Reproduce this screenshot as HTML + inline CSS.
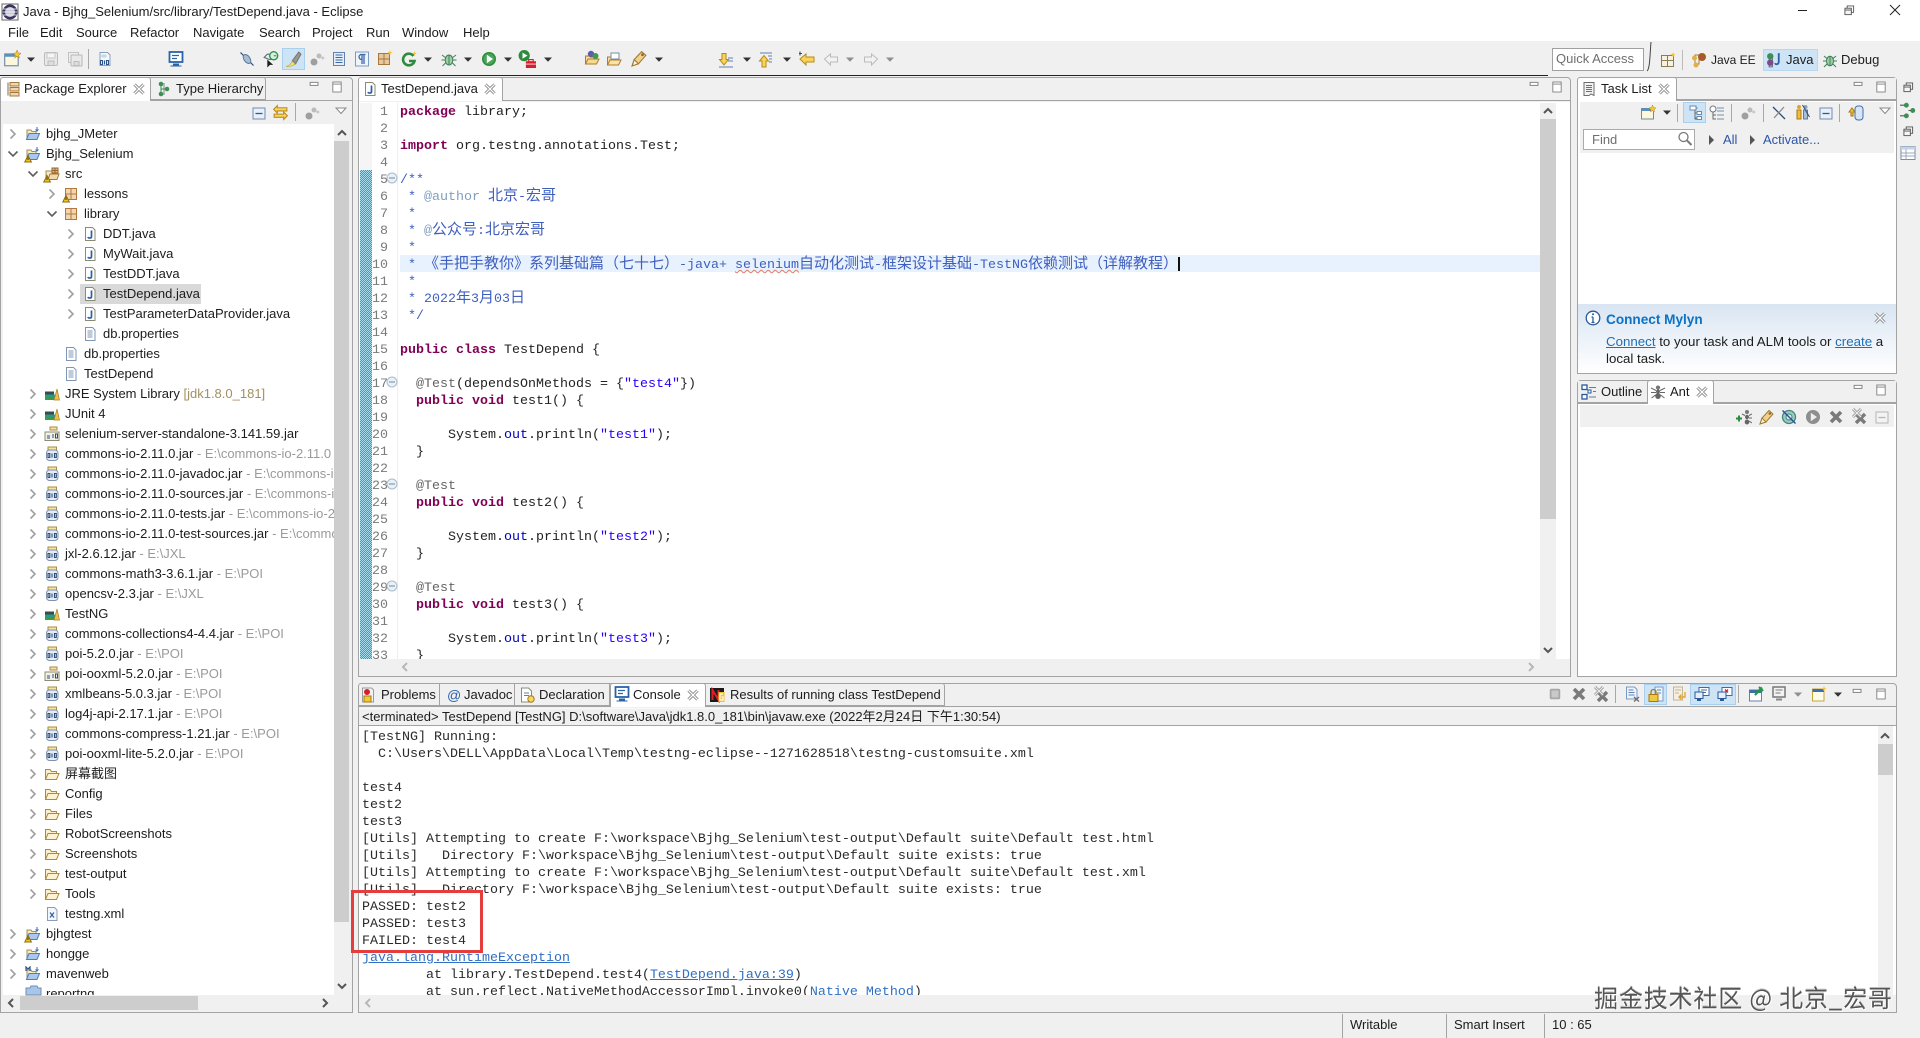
<!DOCTYPE html>
<html lang="zh"><head><meta charset="utf-8"><title>Java - Bjhg_Selenium/src/library/TestDepend.java - Eclipse</title>
<style>
*{box-sizing:border-box}
html,body{margin:0;padding:0}
body{width:1920px;height:1038px;overflow:hidden;background:#f0f0f0;position:relative;font:13px/20px "Liberation Sans","Noto Sans CJK SC",sans-serif;color:#1c1c1c}
.a{position:absolute}
.t{position:absolute;white-space:pre;line-height:20px}
.p{position:absolute;border:1px solid #a3a3a3;border-radius:4px 4px 0 0;background:#f0f0f0}
.hl{position:absolute;left:0;right:0;height:1px;background:#a3a3a3}
.tab{position:absolute;background:#fff;border:1px solid #a3a3a3;border-bottom:0;border-radius:3px 3px 0 0}
.tg{position:absolute;background:#f0f0f0;border:1px solid #a3a3a3;border-left:0;border-radius:0 3px 0 0}
#tree{position:absolute;left:3px;top:124px;width:331px;height:871px;overflow:hidden;background:#fff}
#tree div{height:20px;line-height:20px;white-space:pre;position:relative}
.l0{padding-left:43px}.l1{padding-left:62px}.l2{padding-left:81px}.l3{padding-left:100px}
#tree i{font-style:normal;color:#9a9a9a}
#tree b{font-weight:normal;color:#a38f62}
.ln{height:17px;line-height:17px;white-space:pre}
.m{font-family:"Liberation Mono",monospace;font-size:13.33px}
.k{color:#7f0055;font-weight:bold}
.c{color:#3f5fbf}
.j{color:#7f9fbf}
.h{font:15px/0 "Noto Sans CJK SC",sans-serif}
.s{color:#2a00ff}
.f{color:#0000c0}
.an{color:#646464}
.lk{color:#2f6fc4;text-decoration:underline}
</style></head><body>

<div class="a" style="left:0;top:0;width:1920px;height:41px;background:#fff"></div>
<div class="a" style="left:0;top:41px;width:1920px;height:34px;background:#f0f0f0"></div>
<div class="a" style="left:0;top:75px;width:1548px;height:1px;background:#222"></div>
<div class="t" style="left:23px;top:2px">Java - Bjhg_Selenium/src/library/TestDepend.java - Eclipse</div>
<div class="t" style="left:8px;top:23px">File</div>
<div class="t" style="left:40px;top:23px">Edit</div>
<div class="t" style="left:76px;top:23px">Source</div>
<div class="t" style="left:130px;top:23px">Refactor</div>
<div class="t" style="left:193px;top:23px">Navigate</div>
<div class="t" style="left:259px;top:23px">Search</div>
<div class="t" style="left:312px;top:23px">Project</div>
<div class="t" style="left:366px;top:23px">Run</div>
<div class="t" style="left:402px;top:23px">Window</div>
<div class="t" style="left:463px;top:23px">Help</div>

<div class="a" style="left:282px;top:48px;width:23px;height:22px;background:#cde4f7;border:1px solid #a8cfee"></div>
<div class="a" style="left:1552px;top:48px;width:92px;height:23px;background:#fff;border:1px solid #a0a0a0"></div>
<div class="t" style="left:1556px;top:49px;color:#6f6f6f">Quick Access</div>
<div class="a" style="left:1763px;top:49px;width:55px;height:22px;background:#cde4f7;border:1px solid #b8d8f2"></div>
<div class="t" style="left:1711px;top:50px;font-size:12px">Java EE</div>
<div class="t" style="left:1786px;top:50px">Java</div>
<div class="t" style="left:1841px;top:50px">Debug</div>

<!-- Package Explorer -->
<div class="p" style="left:0;top:77px;width:353px;height:936px"><div class="hl" style="top:22px"></div></div>
<div class="tab" style="left:0;top:77px;width:151px;height:24px"></div>
<div class="tg" style="left:151px;top:77px;width:115px;height:23px"></div>
<div class="t" style="left:24px;top:79px">Package Explorer</div>
<div class="t" style="left:176px;top:79px">Type Hierarchy</div>
<div id="tree">
<div class="a" style="position:absolute;left:77px;top:160px;width:121px;height:20px;background:#d9d9d9"></div>
<div class="l0">bjhg_JMeter</div>
<div class="l0">Bjhg_Selenium</div>
<div class="l1">src</div>
<div class="l2">lessons</div>
<div class="l2">library</div>
<div class="l3">DDT.java</div>
<div class="l3">MyWait.java</div>
<div class="l3">TestDDT.java</div>
<div class="l3">TestDepend.java</div>
<div class="l3">TestParameterDataProvider.java</div>
<div class="l3">db.properties</div>
<div class="l2">db.properties</div>
<div class="l2">TestDepend</div>
<div class="l1">JRE System Library <b>[jdk1.8.0_181]</b></div>
<div class="l1">JUnit 4</div>
<div class="l1">selenium-server-standalone-3.141.59.jar</div>
<div class="l1">commons-io-2.11.0.jar <i>- E:\commons-io-2.11.0</i></div>
<div class="l1">commons-io-2.11.0-javadoc.jar <i>- E:\commons-io-2.11.0</i></div>
<div class="l1">commons-io-2.11.0-sources.jar <i>- E:\commons-io-2.11.0</i></div>
<div class="l1">commons-io-2.11.0-tests.jar <i>- E:\commons-io-2.11.0</i></div>
<div class="l1">commons-io-2.11.0-test-sources.jar <i>- E:\commons-io-2.11.0</i></div>
<div class="l1">jxl-2.6.12.jar <i>- E:\JXL</i></div>
<div class="l1">commons-math3-3.6.1.jar <i>- E:\POI</i></div>
<div class="l1">opencsv-2.3.jar <i>- E:\JXL</i></div>
<div class="l1">TestNG</div>
<div class="l1">commons-collections4-4.4.jar <i>- E:\POI</i></div>
<div class="l1">poi-5.2.0.jar <i>- E:\POI</i></div>
<div class="l1">poi-ooxml-5.2.0.jar <i>- E:\POI</i></div>
<div class="l1">xmlbeans-5.0.3.jar <i>- E:\POI</i></div>
<div class="l1">log4j-api-2.17.1.jar <i>- E:\POI</i></div>
<div class="l1">commons-compress-1.21.jar <i>- E:\POI</i></div>
<div class="l1">poi-ooxml-lite-5.2.0.jar <i>- E:\POI</i></div>
<div class="l1">屏幕截图</div>
<div class="l1">Config</div>
<div class="l1">Files</div>
<div class="l1">RobotScreenshots</div>
<div class="l1">Screenshots</div>
<div class="l1">test-output</div>
<div class="l1">Tools</div>
<div class="l1">testng.xml</div>
<div class="l0">bjhgtest</div>
<div class="l0">hongge</div>
<div class="l0">mavenweb</div>
<div class="l0">reportng</div>
</div>
<div class="a" style="left:334px;top:124px;width:16px;height:871px;background:#f0f0f0"></div>
<div class="a" style="left:334px;top:141px;width:15px;height:781px;background:#cdcdcd"></div>
<div class="a" style="left:20px;top:996px;width:178px;height:14px;background:#cdcdcd"></div>

<!-- Editor -->
<div class="p" style="left:358px;top:77px;width:1213px;height:600px"><div class="hl" style="top:22px"></div></div>
<div class="tab" style="left:358px;top:77px;width:145px;height:24px"></div>
<div class="t" style="left:381px;top:79px">TestDepend.java</div>
<div class="a" style="left:359px;top:102px;width:1211px;height:557px;background:#fff"></div>
<div class="a" style="left:360px;top:103px;width:12px;height:67px;background:#f5f5f5"></div>
<div class="a" style="left:360px;top:170px;width:12px;height:489px;background:repeating-conic-gradient(#2f9fc8 0 25%,#a9dcec 0 50%) 0 0/2px 2px"></div>
<div class="a" style="left:397px;top:103px;width:1px;height:556px;background:#eee"></div>
<div class="a" style="left:400px;top:255px;width:1140px;height:17px;background:#e8f2fe"></div>
<div class="a m" style="left:372px;top:104px;width:16px;height:555px;overflow:hidden;text-align:right;color:#7a7a7a">
<div class="ln"> 1</div><div class="ln"> 2</div><div class="ln"> 3</div><div class="ln"> 4</div><div class="ln"> 5</div><div class="ln"> 6</div><div class="ln"> 7</div><div class="ln"> 8</div><div class="ln"> 9</div><div class="ln">10</div><div class="ln">11</div><div class="ln">12</div><div class="ln">13</div><div class="ln">14</div><div class="ln">15</div><div class="ln">16</div><div class="ln">17</div><div class="ln">18</div><div class="ln">19</div><div class="ln">20</div><div class="ln">21</div><div class="ln">22</div><div class="ln">23</div><div class="ln">24</div><div class="ln">25</div><div class="ln">26</div><div class="ln">27</div><div class="ln">28</div><div class="ln">29</div><div class="ln">30</div><div class="ln">31</div><div class="ln">32</div><div class="ln">33</div>
</div>
<div class="a m" style="left:400px;top:104px;width:1140px;height:555px;overflow:hidden;color:#222">
<div class="ln"><span class="k">package</span> library;</div>
<div class="ln"></div>
<div class="ln"><span class="k">import</span> org.testng.annotations.Test;</div>
<div class="ln"></div>
<div class="ln c">/**</div>
<div class="ln c"> * <span class="j">@author</span> <span class="h">北京</span>-<span class="h">宏哥</span></div>
<div class="ln c"> *</div>
<div class="ln c"> * <span class="j">@</span><span class="h">公众号</span>:<span class="h">北京宏哥</span></div>
<div class="ln c"> *</div>
<div class="ln c"> * <span class="h">《手把手教你》系列基础篇（七十七）</span>-java+ <span style="text-decoration:underline wavy #e07a6a 1px">selenium</span><span class="h">自动化测试</span>-<span class="h">框架设计基础</span>-TestNG<span class="h">依赖测试（详解教程）</span></div>
<div class="ln c"> *</div>
<div class="ln c"> * 2022<span class="h">年</span>3<span class="h">月</span>03<span class="h">日</span></div>
<div class="ln c"> */</div>
<div class="ln"></div>
<div class="ln"><span class="k">public</span> <span class="k">class</span> TestDepend {</div>
<div class="ln"></div>
<div class="ln">  <span class="an">@Test</span>(dependsOnMethods = {<span class="s">"test4"</span>})</div>
<div class="ln">  <span class="k">public</span> <span class="k">void</span> test1() {</div>
<div class="ln"></div>
<div class="ln">      System.<span class="f">out</span>.println(<span class="s">"test1"</span>);</div>
<div class="ln">  }</div>
<div class="ln"></div>
<div class="ln">  <span class="an">@Test</span></div>
<div class="ln">  <span class="k">public</span> <span class="k">void</span> test2() {</div>
<div class="ln"></div>
<div class="ln">      System.<span class="f">out</span>.println(<span class="s">"test2"</span>);</div>
<div class="ln">  }</div>
<div class="ln"></div>
<div class="ln">  <span class="an">@Test</span></div>
<div class="ln">  <span class="k">public</span> <span class="k">void</span> test3() {</div>
<div class="ln"></div>
<div class="ln">      System.<span class="f">out</span>.println(<span class="s">"test3"</span>);</div>
<div class="ln">  }</div>
</div>
<div class="a" style="left:1178px;top:257px;width:2px;height:14px;background:#111"></div>
<div class="a" style="left:1540px;top:103px;width:16px;height:556px;background:#f0f0f0"></div>
<div class="a" style="left:1540px;top:119px;width:16px;height:400px;background:#cdcdcd"></div>
<div class="a" style="left:359px;top:659px;width:1211px;height:17px;background:#f0f0f0"></div>

<!-- Task List -->
<div class="p" style="left:1577px;top:77px;width:320px;height:297px;background:#fff"><div class="hl" style="top:22px"></div></div>
<div class="a" style="left:1578px;top:78px;width:318px;height:22px;background:#f0f0f0"></div>
<div class="a" style="left:1578px;top:99px;width:318px;height:1px;background:#a3a3a3"></div>
<div class="tab" style="left:1577px;top:77px;width:100px;height:24px"></div>
<div class="t" style="left:1601px;top:79px">Task List</div>
<div class="a" style="left:1580px;top:102px;width:314px;height:51px;background:#f0f0f0"></div>
<div class="a" style="left:1683px;top:102px;width:23px;height:21px;background:#cde4f7;border:1px solid #a8cfee"></div>
<div class="a" style="left:1583px;top:129px;width:112px;height:21px;background:#fff;border:1px solid #aaa"></div>
<div class="t" style="left:1592px;top:130px;color:#6f6f6f">Find</div>
<div class="t" style="left:1723px;top:130px;color:#2c55a8">All</div>
<div class="t" style="left:1763px;top:130px;color:#2c55a8">Activate...</div>
<div class="a" style="left:1578px;top:304px;width:318px;height:69px;background:linear-gradient(#d9e5f2,#fff)"></div>
<div class="t" style="left:1606px;top:310px;font-size:13.6px;font-weight:bold;color:#0b72c6">Connect Mylyn</div>
<div class="t" style="left:1606px;top:332px;font-size:13.3px"><span style="color:#1f6fb5;text-decoration:underline">Connect</span> to your task and ALM tools or <span style="color:#1f6fb5;text-decoration:underline">create</span> a</div>
<div class="t" style="left:1606px;top:349px;font-size:13.3px">local task.</div>

<!-- Outline / Ant -->
<div class="p" style="left:1577px;top:380px;width:320px;height:297px;background:#fff"><div class="hl" style="top:22px"></div></div>
<div class="a" style="left:1578px;top:381px;width:318px;height:22px;background:#f0f0f0"></div>
<div class="a" style="left:1578px;top:402px;width:318px;height:1px;background:#a3a3a3"></div>
<div class="tab" style="left:1647px;top:380px;width:67px;height:24px"></div>
<div class="a" style="left:1580px;top:405px;width:314px;height:22px;background:#f0f0f0"></div>
<div class="t" style="left:1601px;top:382px">Outline</div>
<div class="t" style="left:1670px;top:382px">Ant</div>

<!-- Console -->
<div class="p" style="left:358px;top:683px;width:1539px;height:330px"><div class="hl" style="top:22px"></div></div>
<div class="tg" style="left:358px;top:683px;width:82px;height:23px;border-left:1px solid #a3a3a3;border-radius:3px 0 0 0"></div>
<div class="tg" style="left:440px;top:683px;width:75px;height:23px;border-radius:0"></div>
<div class="tg" style="left:515px;top:683px;width:95px;height:23px;border-radius:0"></div>
<div class="tab" style="left:610px;top:683px;width:96px;height:24px"></div>
<div class="tg" style="left:706px;top:683px;width:239px;height:23px"></div>
<div class="t" style="left:381px;top:685px">Problems</div>
<div class="t" style="left:464px;top:685px">Javadoc</div>
<div class="t" style="left:539px;top:685px">Declaration</div>
<div class="t" style="left:633px;top:685px">Console</div>
<div class="t" style="left:730px;top:685px">Results of running class TestDepend</div>
<div class="a" style="left:1644px;top:684px;width:23px;height:21px;background:#cde4f7;border:1px solid #a8cfee"></div>
<div class="a" style="left:1690px;top:684px;width:46px;height:21px;background:#cde4f7;border:1px solid #a8cfee"></div>
<div class="t" style="left:362px;top:707px">&lt;terminated&gt; TestDepend [TestNG] D:\software\Java\jdk1.8.0_181\bin\javaw.exe (2022年2月24日 下午1:30:54)</div>
<div class="a" style="left:359px;top:708px;width:1537px;height:1px;background:#f8f8f8"></div>
<div class="a" style="left:359px;top:725px;width:1537px;height:1px;background:#a3a3a3"></div>
<div class="a" style="left:359px;top:726px;width:1537px;height:269px;background:#fff"></div>
<div class="a m" style="left:362px;top:729px;width:1516px;height:266px;overflow:hidden;color:#2a2a2a">
<div class="ln">[TestNG] Running:</div>
<div class="ln">  C:\Users\DELL\AppData\Local\Temp\testng-eclipse--1271628518\testng-customsuite.xml</div>
<div class="ln"></div>
<div class="ln">test4</div>
<div class="ln">test2</div>
<div class="ln">test3</div>
<div class="ln">[Utils] Attempting to create F:\workspace\Bjhg_Selenium\test-output\Default suite\Default test.html</div>
<div class="ln">[Utils]   Directory F:\workspace\Bjhg_Selenium\test-output\Default suite exists: true</div>
<div class="ln">[Utils] Attempting to create F:\workspace\Bjhg_Selenium\test-output\Default suite\Default test.xml</div>
<div class="ln">[Utils]   Directory F:\workspace\Bjhg_Selenium\test-output\Default suite exists: true</div>
<div class="ln">PASSED: test2</div>
<div class="ln">PASSED: test3</div>
<div class="ln">FAILED: test4</div>
<div class="ln"><span class="lk">java.lang.RuntimeException</span></div>
<div class="ln">        at library.TestDepend.test4(<span class="lk">TestDepend.java:39</span>)</div>
<div class="ln">        at sun.reflect.NativeMethodAccessorImpl.invoke0(<span class="lk" style="text-decoration:none">Native Method</span>)</div>
</div>
<div class="a" style="left:1878px;top:726px;width:15px;height:269px;background:#f0f0f0"></div>
<div class="a" style="left:1878px;top:744px;width:15px;height:31px;background:#cdcdcd"></div>
<div class="a" style="left:359px;top:995px;width:1537px;height:17px;background:#f0f0f0"></div>

<!-- Status bar -->
<div class="a" style="left:1342px;top:1014px;width:1px;height:24px;background:#a3a3a3"></div>
<div class="a" style="left:1446px;top:1014px;width:1px;height:24px;background:#a3a3a3"></div>
<div class="a" style="left:1544px;top:1014px;width:1px;height:24px;background:#a3a3a3"></div>
<div class="t" style="left:1350px;top:1015px">Writable</div>
<div class="t" style="left:1454px;top:1015px">Smart Insert</div>
<div class="t" style="left:1552px;top:1015px">10 : 65</div>

<!-- Icons -->
<svg class="a" style="left:0;top:0" width="1920" height="1038" viewBox="0 0 1920 1038">
<defs>
<symbol id="chr" viewBox="0 0 16 16"><path d="M5.500 3.500 10 8l-4.500 4.500" fill="none" stroke="#a0a0a0" stroke-width="1.600"/></symbol>
<symbol id="chd" viewBox="0 0 16 16"><path d="M3.500 5.500 8 10l4.500-4.500" fill="none" stroke="#5f5f5f" stroke-width="1.600"/></symbol>
<symbol id="prj" viewBox="0 0 16 16"><path d="M2 13V4h4l1 1.500h4V8" fill="#f7e9c4" stroke="#a58c55"/><path d="M1.500 13.500 4 7.500h10.500l-2.500 6z" fill="#a9c8ec" stroke="#4d7fbf"/><path d="M12 1v4M10.500 3.500 12 5l1.500-1.500" fill="none" stroke="#3d6fb0"/></symbol>
<symbol id="warn" viewBox="0 0 16 16"><path d="M4 8.500.8 15h6.600z" fill="#f5c518" stroke="#8a6d10"/><path d="M4 10.500v2.500" stroke="#333"/></symbol>
<symbol id="mvn" viewBox="0 0 16 16"><path d="M2 13V4h4l1 1.500h4V8" fill="#f7e9c4" stroke="#a58c55"/><path d="M1.500 13.500 4 7.500h10.500l-2.500 6z" fill="#a9c8ec" stroke="#4d7fbf"/><path d="M1 5V1l2 2 2-2v4" fill="none" stroke="#26508a" stroke-width="1.200"/><path d="M12 1v4M10.500 3.500 12 5l1.500-1.500" fill="none" stroke="#3d6fb0"/></symbol>
<symbol id="src" viewBox="0 0 16 16"><path d="M2 13V5h11v8z" fill="#f7e9c4" stroke="#a58c55"/><path d="M4 13.500 6 8h9l-2 5.500z" fill="#f4d9a8" stroke="#a5793d"/><rect x="8" y="2" width="6" height="5" fill="#e0b37c" stroke="#96642f"/><path d="M11 2v5M8 4.500h6" stroke="#96642f"/></symbol>
<symbol id="pkg" viewBox="0 0 16 16"><rect x="2.500" y="2.500" width="11" height="11" fill="#f2d6b0" stroke="#b2793f"/><path d="M8 2.500v11M2.500 8h11" stroke="#b2793f"/></symbol>
<symbol id="jf" viewBox="0 0 16 16"><path d="M3.500 1.500h7l2.500 2.500v10.500H3.500z" fill="#fff" stroke="#8b8b72"/><path d="M9.500 4.500v6c0 2-3 2-3.500.500" fill="none" stroke="#2c5fa8" stroke-width="1.700"/></symbol>
<symbol id="txt" viewBox="0 0 16 16"><path d="M3.500 1.500h7l2.500 2.500v10.500H3.500z" fill="#fff" stroke="#7f95b5"/><path d="M5.500 5h5M5.500 7h5M5.500 9h5M5.500 11h5" stroke="#7f95b5"/></symbol>
<symbol id="xml" viewBox="0 0 16 16"><path d="M3.500 1.500h7l2.500 2.500v10.500H3.500z" fill="#f3f6fb" stroke="#8b9cb5"/><path d="M6 6.500l4 5M10 6.500l-4 5" stroke="#2c5fa8" stroke-width="1.200"/></symbol>
<symbol id="lib" viewBox="0 0 16 16"><rect x="1" y="5.500" width="9" height="3" fill="#3c4a50"/><rect x="1" y="8.500" width="10" height="2.500" fill="#2a9a86"/><rect x="1" y="11" width="10" height="3" fill="#3f9a3f"/><path d="M10 14 13 3l2.500 11z" fill="#eec14e" stroke="#a27f22" stroke-width=".7"/></symbol>
<symbol id="jar" viewBox="0 0 16 16"><rect x="4" y="1" width="8.500" height="3" fill="#f6e3a6" stroke="#a98b45"/><rect x="2.500" y="4" width="11.500" height="10.500" rx="3" fill="#e3ecf6" stroke="#7f92ab"/><path d="M4 7.500h1.800v4H4zM10.500 7.500h1.800v4h-1.800zM8 7.500v4" fill="none" stroke="#2d4d78" stroke-width="1.100"/></symbol>
<symbol id="jar2" viewBox="0 0 16 16"><rect x="6" y="1" width="7" height="3" fill="#f6e3a6" stroke="#a98b45"/><rect x="1" y="6" width="14" height="8.500" fill="#f0f0e4" stroke="#8b8b72"/><path d="M3 10h3M3 12h3M9 8v4M11.500 8h2v4h-2z" fill="none" stroke="#2d4d78"/></symbol>
<symbol id="fld" viewBox="0 0 16 16"><path d="M1.500 13.500V3.500h4.500l1.500 2h5v2" fill="#fbeecb" stroke="#b08a3c"/><path d="M1.500 13.500 4 7.500h11l-2.500 6z" fill="#fdf2d4" stroke="#b08a3c"/></symbol>
<symbol id="x" viewBox="0 0 12 12"><path d="M1.500 1.500l9 9M10.500 1.500l-9 9" stroke="#777" stroke-width="3" fill="none"/><path d="M1.500 1.500l9 9M10.500 1.500l-9 9" stroke="#fff" stroke-width="1.300" fill="none"/></symbol>
<symbol id="min" viewBox="0 0 12 8"><rect x="1" y="1.500" width="9" height="3.500" fill="#fff" stroke="#777"/></symbol>
<symbol id="max" viewBox="0 0 12 14"><rect x="1" y="1" width="10" height="12" fill="#fff" stroke="#777"/><path d="M1 3.500h10" stroke="#777"/></symbol>
<symbol id="dd" viewBox="0 0 8 5"><path d="M0 .5h8L4 4.800z" fill="#333"/></symbol>
<symbol id="ddg" viewBox="0 0 8 5"><path d="M0 .5h8L4 4.800z" fill="#8e8e8e"/></symbol>
<symbol id="tri" viewBox="0 0 12 8"><path d="M1 1h10L6 6.500z" fill="#fff" stroke="#888"/></symbol>
<symbol id="arr" viewBox="0 0 6 10"><path d="M1 0v10l5-5z" fill="#555"/></symbol>
<symbol id="up" viewBox="0 0 12 12"><path d="M2 8l4-4 4 4" fill="none" stroke="#555" stroke-width="2"/></symbol>
<symbol id="dn" viewBox="0 0 12 12"><path d="M2 4l4 4 4-4" fill="none" stroke="#555" stroke-width="2"/></symbol>
<symbol id="lf" viewBox="0 0 12 12"><path d="M8 2 4 6l4 4" fill="none" stroke="#555" stroke-width="2"/></symbol>
<symbol id="rt" viewBox="0 0 12 12"><path d="M4 2l4 4-4 4" fill="none" stroke="#555" stroke-width="2"/></symbol>
<symbol id="lfg" viewBox="0 0 12 12"><path d="M8 2 4 6l4 4" fill="none" stroke="#b8b8b8" stroke-width="2"/></symbol>
<symbol id="rtg" viewBox="0 0 12 12"><path d="M4 2l4 4-4 4" fill="none" stroke="#b8b8b8" stroke-width="2"/></symbol>
<symbol id="fold" viewBox="0 0 12 12"><circle cx="6" cy="6" r="5" fill="#e9f0f6" stroke="#a9bccd"/><path d="M3 6h6" stroke="#6f8ba3"/></symbol>
<symbol id="new" viewBox="0 0 16 16"><rect x="1.500" y="3.500" width="12" height="10.500" fill="#fdf7dc" stroke="#6b8aa8"/><rect x="1.500" y="3.500" width="12" height="2.500" fill="#5a8fc0"/><path d="M12.500 0l1 2.500 2.500.500-2 1.500.500 2.500-2-1.500-2 1.500.500-2.500-2-1.500 2.500-.500z" fill="#f5c63a" stroke="#b88a1a" stroke-width=".5"/></symbol>
<symbol id="sv" viewBox="0 0 16 16"><rect x="1.500" y="1.500" width="13" height="13" rx="1.500" fill="#e9e9e9" stroke="#bcbcbc"/><rect x="4" y="2" width="8" height="5" fill="#f6f6f6" stroke="#c6c6c6"/><rect x="5" y="10" width="6" height="4.500" fill="#ddd" stroke="#bcbcbc"/></symbol>
<symbol id="sva" viewBox="0 0 16 16"><rect x="1.500" y="1.500" width="10" height="10" fill="#eee" stroke="#c2c2c2"/><rect x="4" y="4" width="11" height="11" rx="1" fill="#e9e9e9" stroke="#b8b8b8"/><rect x="7" y="10.500" width="5" height="4" fill="#ddd" stroke="#bcbcbc"/></symbol>
<symbol id="bin" viewBox="0 0 16 16"><path d="M3 1.500h7.500L13 4v10.500H3z" fill="#f5f8fc" stroke="#8ba0bb"/><path d="M4.500 3.500h5v3h-5z" fill="#c8d5e6"/><path d="M3.500 9.500h2v4h-2zM7.500 9.500v4M9.500 9.500h2v4h-2z" fill="none" stroke="#2d5488" stroke-width="1.100"/></symbol>
<symbol id="mon" viewBox="0 0 16 16"><rect x="1.500" y="1" width="13" height="10" fill="#fff" stroke="#2a63a8" stroke-width="1.800"/><path d="M4 4.500h7M4 7.500h5" stroke="#2a63a8" stroke-width="1.200"/><path d="M5 12.500h6v2H5z" fill="#2a63a8"/><path d="M2.500 15h11" stroke="#2a63a8"/></symbol>
<symbol id="nib" viewBox="0 0 16 16"><path d="M1.500 1.500 14.500 14.500" stroke="#2a4a72" stroke-width="1.200"/><ellipse cx="8" cy="8" rx="3" ry="5" transform="rotate(-35 8 8)" fill="#a8bdd4" stroke="#5a7a9c"/></symbol>
<symbol id="srch" viewBox="0 0 16 16"><path d="M2 6 5 3h5v5H7z" fill="#e8edf2" stroke="#5f6b78"/><path d="M5 8v7.500l2.500-2.500h3z" fill="#1e1e1e"/><circle cx="11" cy="4.500" r="3.800" fill="#d9f0dd" stroke="#2c9150" stroke-width="1.300"/><path d="M11 4.500h2.500" stroke="#2c9150"/></symbol>
<symbol id="brush" viewBox="0 0 16 16"><path d="M1 14.500c3-.500 5-3 6-5.500l3 3c-2 1.500-4 3-9 2.500z" fill="#f3dc6a" stroke="#c4a62c" stroke-width=".6"/><path d="M7 9l6-8 2 2-5 9z" fill="#9a9a8a" stroke="#777"/></symbol>
<symbol id="gr" viewBox="0 0 16 16"><circle cx="5" cy="11" r="3.500" fill="#9f9f9f"/><circle cx="10" cy="5" r="2.500" fill="#bbb"/><path d="M12 7h3.500M13.800 5.500v3" stroke="#bbb"/></symbol>
<symbol id="pg" viewBox="0 0 16 16"><rect x="2.500" y="1.500" width="11" height="13" fill="#e6eefa" stroke="#5f82b0"/><path d="M4.500 4h7M4.500 6.500h7M4.500 9h7M4.500 11.500h7" stroke="#3c6aa5"/></symbol>
<symbol id="para" viewBox="0 0 16 16"><rect x="1.500" y="1" width="13" height="14" fill="#eef4fb" stroke="#7a9bc4"/><path d="M6 3.500h5.500M8 3.500V13M10 3.500V13M8 8.500c-4 0-4-5 0-5" fill="none" stroke="#3c6aa5" stroke-width="1.300"/></symbol>
<symbol id="typ" viewBox="0 0 16 16"><rect x="1.500" y="3.500" width="11" height="11" fill="#e8c79c" stroke="#a5793d"/><path d="M7 3.500v11M1.500 9h11" stroke="#a5793d"/><path d="M13 0l.8 2 2 .6-2 .8-.8 2-.8-2-2-.8 2-.6z" fill="#f5c63a"/></symbol>
<symbol id="gnew" viewBox="0 0 16 16"><path d="M12.500 5a5.800 5.800 0 1 0 1 5H8" fill="none" stroke="#2e8b3e" stroke-width="2.600"/><path d="M13.500 0l.7 1.800 1.800.5-1.800.7-.7 1.800-.7-1.800-1.800-.7 1.800-.5z" fill="#f5c63a"/></symbol>
<symbol id="bug" viewBox="0 0 16 16"><ellipse cx="8" cy="9" rx="3.800" ry="5" fill="#9fcf9f" stroke="#3f7f5f"/><path d="M8 4v10M1 4l4 3M15 4l-4 3M.5 9h3.500M15.500 9H12M1.500 15l3-3M14.500 15l-3-3" stroke="#3f7f5f"/></symbol>
<symbol id="run" viewBox="0 0 16 16"><circle cx="8" cy="8" r="7" fill="#2e8b3e"/><circle cx="8" cy="8" r="5.500" fill="#48a656"/><path d="M5.800 3.800 12 8l-6.200 4.200z" fill="#fff"/></symbol>
<symbol id="runx" viewBox="0 0 16 16"><circle cx="5.500" cy="5" r="5" fill="#2e8b3e"/><path d="M4 2.300 8.500 5 4 7.700z" fill="#fff"/><rect x="7" y="10" width="9" height="6" fill="#d61f2c"/><rect x="9.500" y="8.500" width="4" height="2" fill="none" stroke="#d61f2c"/><path d="M7 12.500h9" stroke="#fff" stroke-width=".7"/></symbol>
<symbol id="opr" viewBox="0 0 16 16"><path d="M1.500 14V6h4l1 1h6v2" fill="#f6dca2" stroke="#b07d28"/><path d="M1.500 14 4 9h11l-2.500 5z" fill="#f9d88c" stroke="#b07d28"/><circle cx="7" cy="4" r="3.200" fill="#5d5da8"/><circle cx="11.500" cy="6" r="3" fill="#3f9a4f"/></symbol>
<symbol id="opf" viewBox="0 0 16 16"><path d="M1.500 14V6h4l1 1h6v2" fill="#f6dca2" stroke="#b07d28"/><path d="M1.500 14 4 9h11l-2.500 5z" fill="#f9e3ad" stroke="#b07d28"/><rect x="5" y="2" width="8" height="6" fill="#fff" stroke="#7a8ea8"/></symbol>
<symbol id="tch" viewBox="0 0 16 16"><path d="M1 15 3 9l7-7.500 4 3.500-7 8z" fill="#f1d08a" stroke="#9c7a35"/><path d="M1 15 3 9l4 4z" fill="#f6f2df" stroke="#9c7a35"/><circle cx="10.800" cy="4.500" r="1.300" fill="#8b6a2a"/></symbol>
<symbol id="dnn" viewBox="0 0 16 16"><path d="M4 1.500h4v6h2.500L6 13 1.500 7.500H4z" fill="#f9d45a" stroke="#b88a1a"/><path d="M10 6h5M10 9h5M1 15h14" stroke="#5a82b8"/></symbol>
<symbol id="upp" viewBox="0 0 16 16"><path d="M4 15v-6H1.500L6 3.500 10.500 9H8v6z" fill="#f9d45a" stroke="#b88a1a"/><path d="M2 1h12M10 4h4M11 7h3M11 10h3" stroke="#5a82b8"/></symbol>
<symbol id="bk" viewBox="0 0 16 16"><path d="M1 8l6-5v3h8v5H7v3z" fill="#f9d45a" stroke="#b88a1a"/><path d="M1 .5v4M-1 2.500h4" stroke="#2a4a72"/></symbol>
<symbol id="bkg" viewBox="0 0 16 16"><path d="M1.500 8l6-5v3h7v5h-7v3z" fill="#f2f2f2" stroke="#bbb"/></symbol>
<symbol id="fwg" viewBox="0 0 16 16"><path d="M14.500 8l-6-5v3h-7v5h7v3z" fill="#f2f2f2" stroke="#bbb"/></symbol>
<symbol id="clp" viewBox="0 0 16 16"><rect x="2" y="3" width="12" height="11" fill="#e9f0f9" stroke="#6e8cb2"/><path d="M4.500 8.500h7" stroke="#2a5a9a" stroke-width="1.300"/></symbol>
<symbol id="lnk" viewBox="0 0 16 16"><path d="M5 1.500 1.500 5 5 8.500V6.500h9v-3H5z" fill="#f9d45a" stroke="#b88a1a"/><path d="M11 7.500 14.500 11 11 14.500v-2H2v-3h9z" fill="#f9d45a" stroke="#b88a1a"/></symbol>
<symbol id="tr" viewBox="0 0 16 16"><path d="M5.500 3h5M8 3v11h3M8 8h3M8 13h3" fill="none" stroke="#6b6b6b"/><rect x="3" y="1" width="6" height="4" fill="#fff" stroke="#6b8aa8"/><rect x="10" y="6.500" width="4.500" height="3" fill="#fff" stroke="#6b8aa8"/><rect x="10" y="11.500" width="4.500" height="3" fill="#fff" stroke="#6b8aa8"/></symbol>
<symbol id="tr2" viewBox="0 0 16 16"><circle cx="4" cy="4" r="3" fill="#fff" stroke="#6b7a88"/><path d="M4 7v7h3M4 10h3" fill="none" stroke="#6b6b6b"/><path d="M8 3h7M8 6h7M8 10h7M8 14h7" stroke="#7a8ea8"/></symbol>
<symbol id="xx" viewBox="0 0 16 16"><path d="M2 2l12 12" stroke="#2a4a72" stroke-width="1.300"/><path d="M13 2 3 13" stroke="#8a8a8a" stroke-width="1.300"/></symbol>
<symbol id="ppl" viewBox="0 0 16 16"><circle cx="5" cy="3" r="2" fill="#e6a32a"/><path d="M3 6h4v9H3z" fill="#f0bd3c" stroke="#a97812"/><circle cx="11.500" cy="3" r="2" fill="#8aa0bb"/><path d="M9.500 6h4v9h-4z" fill="#a8bdd6" stroke="#5f7b9c"/><path d="M8.500 1l7 12" stroke="#2a4a72"/></symbol>
<symbol id="tsk" viewBox="0 0 16 16"><path d="M3 1.500h10v13l-3-1.500-2 1.500-5 0z" fill="#f3f3f3" stroke="#6e6e6e"/><path d="M5 4.500h6M5 6.500h6M5 8.500h6M5 10.500h6" stroke="#6e6e6e"/></symbol>
<symbol id="syn" viewBox="0 0 16 16"><rect x="7" y="1" width="8" height="14" rx="3" fill="#d8e5f2" stroke="#3f6fb0"/><path d="M1 7l3-4 3 4H5v4H3V7z" fill="#f0c83c" stroke="#a97812"/></symbol>
<symbol id="ant" viewBox="0 0 16 16"><ellipse cx="8" cy="3.500" rx="2.200" ry="2" fill="#777"/><ellipse cx="8" cy="7.500" rx="2" ry="2.200" fill="#666"/><ellipse cx="8" cy="12" rx="2.800" ry="3" fill="#666"/><path d="M1 4l5 2.500M15 4l-5 2.500M1 8.500h5M15 8.500h-5M1.500 14l4-3M14.500 14l-4-3" stroke="#666"/></symbol>
<symbol id="antp" viewBox="0 0 16 16"><path d="M0 9.500h6M3 6.500v6" stroke="#2b8b3c" stroke-width="2"/><ellipse cx="11" cy="3" rx="2" ry="2" fill="#777"/><ellipse cx="11" cy="8" rx="2" ry="2.200" fill="#666"/><ellipse cx="11" cy="13" rx="2.300" ry="2.500" fill="#666"/><path d="M6 5l3 1.500M16 5l-3 1.500M16 9h-3M16 14l-3-2" stroke="#666"/></symbol>
<symbol id="tgt" viewBox="0 0 16 16"><circle cx="8" cy="8" r="6.500" fill="#9fc8bf" stroke="#3d8a7d" stroke-width="1.300"/><circle cx="8" cy="8" r="3" fill="#dfeeea" stroke="#3d8a7d"/><path d="M1.500 1.500l13 13" stroke="#2a4a9a" stroke-width="1.300"/></symbol>
<symbol id="rung" viewBox="0 0 16 16"><circle cx="8" cy="8" r="7" fill="#8e8e8e"/><path d="M5.800 3.800 12 8l-6.200 4.200z" fill="#ededed"/></symbol>
<symbol id="xg" viewBox="0 0 16 16"><path d="M3 3l10 10M13 3 3 13" stroke="#7a7a7a" stroke-width="3.600"/></symbol>
<symbol id="xxg" viewBox="0 0 16 16"><path d="M5 6l9 9M14 6l-9 9" stroke="#7a7a7a" stroke-width="3.400"/><path d="M2 1l8 8M10 1 2 9" stroke="#9a9a9a" stroke-width="2.800"/><path d="M2 1l8 8M10 1 2 9" stroke="#f0f0f0" stroke-width="1"/></symbol>
<symbol id="clg" viewBox="0 0 16 16"><rect x="2" y="3" width="12" height="11" fill="#f3f3f3" stroke="#b5b5b5"/><path d="M4.500 8.500h7" stroke="#b5b5b5" stroke-width="1.300"/></symbol>
<symbol id="stp" viewBox="0 0 16 16"><rect x="2" y="2" width="12" height="12" rx="2" fill="#a6a6a6"/><rect x="4" y="4" width="8" height="8" fill="#c9c9c9"/></symbol>
<symbol id="doc" viewBox="0 0 16 16"><path d="M2.500 1h8l2.500 2.500V13H2.500z" fill="#eef4fb" stroke="#7a9bc4"/><path d="M4.500 4h5M4.500 6.500h6M4.500 9h6" stroke="#5a82b8"/><path d="M10 11l5 4.500M15 11l-5 4.500" stroke="#6b6b6b" stroke-width="1.300"/></symbol>
<symbol id="lock" viewBox="0 0 16 16"><rect x="7" y="1" width="8" height="14" fill="#eef4fb" stroke="#7a9bc4"/><path d="M9 4h4M9 7h4" stroke="#5a82b8"/><path d="M3 8.500V6a2.500 2.500 0 0 1 5 0v2.500" fill="none" stroke="#a97812" stroke-width="1.300"/><rect x="1" y="8.500" width="9" height="7" fill="#f0c83c" stroke="#a97812"/></symbol>
<symbol id="wrap" viewBox="0 0 16 16"><path d="M2.500 1h9v13h-9z" fill="#f4efe2" stroke="#c1b592"/><path d="M4 4h6M4 7h4" stroke="#c1b592"/><path d="M14 6v5H8.500M10.500 8.500l-2.500 2.500 2.500 2.500" fill="none" stroke="#e2a72a" stroke-width="1.400"/></symbol>
<symbol id="cs1" viewBox="0 0 16 16"><rect x="5" y="1.500" width="10" height="8" fill="#fff" stroke="#3c6aa5"/><path d="M7 4h6M7 6.500h5" stroke="#3c6aa5"/><rect x="1" y="6" width="8" height="6.500" fill="#e6eefa" stroke="#2a5a9a"/><path d="M3 14h4" stroke="#2a5a9a" stroke-width="2"/></symbol>
<symbol id="cs2" viewBox="0 0 16 16"><rect x="5" y="1.500" width="10" height="8" fill="#fff" stroke="#3c6aa5"/><path d="M8 3.500l3 3M11 3.500l-3 3" stroke="#d61f2c" stroke-width="1.300"/><rect x="1" y="6" width="8" height="6.500" fill="#e6eefa" stroke="#2a5a9a"/><path d="M3 14h4" stroke="#2a5a9a" stroke-width="2"/></symbol>
<symbol id="pinw" viewBox="0 0 16 16"><rect x="1.500" y="4" width="12" height="11" fill="#fff" stroke="#5f82b0"/><rect x="1.500" y="4" width="12" height="3" fill="#3f6fa8"/><path d="M7 9l7-7.500M11 1l4 4" stroke="#1f9a44" stroke-width="2.200"/></symbol>
<symbol id="mng" viewBox="0 0 16 16"><rect x="2" y="1" width="12" height="10" fill="#f3f3f3" stroke="#777" stroke-width="1.500"/><path d="M4.500 4h7M4.500 7h5" stroke="#777"/><path d="M5 12.500h6v2H5z" fill="#888"/></symbol>
<symbol id="opp" viewBox="0 0 16 16"><rect x="1.500" y="3" width="11.500" height="12" fill="#fffce8" stroke="#c4a83c"/><rect x="1.500" y="3" width="11.500" height="3" fill="#3f6fa8"/><path d="M13 0l.8 2 2 .6-2 .8-.8 2-.8-2-2-.8 2-.6z" fill="#f5c63a"/></symbol>
<symbol id="hier" viewBox="0 0 16 16"><path d="M8 2v12" stroke="#888"/><circle cx="5" cy="3" r="2.300" fill="#3d8f55"/><circle cx="11" cy="8" r="2.300" fill="#3d8f55"/><circle cx="5" cy="13" r="2.300" fill="#3d8f55"/><path d="M5 5v6M5 8h4" stroke="#3d8f55"/></symbol>
<symbol id="pkx" viewBox="0 0 16 16"><path d="M3 1.500v13" stroke="#7a6d4d"/><rect x="5" y="1.500" width="9" height="3.500" fill="#f2d6b0" stroke="#a5793d"/><rect x="5" y="6.500" width="9" height="3.500" fill="#f2d6b0" stroke="#a5793d"/><rect x="5" y="11.500" width="9" height="3.500" fill="#f2d6b0" stroke="#a5793d"/></symbol>
<symbol id="pb" viewBox="0 0 16 16"><path d="M2.500 1h9l2 2v12h-11z" fill="#f3f3f3" stroke="#9a9a9a"/><circle cx="7" cy="5" r="3" fill="#d61f2c"/><path d="M4 9h7v6H4z" fill="#f0c83c" stroke="#a97812"/></symbol>
<symbol id="dcl" viewBox="0 0 16 16"><path d="M2.500 1h7l3 3v11h-10z" fill="#fff" stroke="#8b8b72"/><path d="M5 6h5M5 8.500h5" stroke="#5a82b8"/><circle cx="12" cy="12" r="3.200" fill="#f5d768" stroke="#a97812"/></symbol>
<symbol id="ng" viewBox="0 0 16 16"><rect x="1" y="1" width="14" height="14" fill="#1a1a1a"/><path d="M3.500 13V3l6 10V3" fill="none" stroke="#e01f2a" stroke-width="2"/><rect x="9.500" y="5" width="6" height="10" fill="#f3c322"/><path d="M14 7h-3v6h3v-3h-1.500" fill="none" stroke="#fff" stroke-width="1.200"/></symbol>
<symbol id="outl" viewBox="0 0 16 16"><rect x="1" y="1" width="5" height="4.500" fill="#fff" stroke="#2a5a9a" stroke-width="1.300"/><rect x="1" y="10.500" width="5" height="4.500" fill="#fff" stroke="#2a5a9a" stroke-width="1.300"/><rect x="7" y="6" width="3" height="3" fill="#fff" stroke="#2a5a9a"/><path d="M8 3.500h7M12 7.500h3M8 13h7" stroke="#6b7a88"/></symbol>
<symbol id="persp" viewBox="0 0 16 16"><rect x="1.500" y="3.500" width="12" height="11" fill="#f7f2e0" stroke="#8a7d55"/><path d="M7.500 3.500v11M1.500 8.500h12" stroke="#8a7d55"/><path d="M13 0l.8 2 2 .6-2 .8-.8 2-.8-2-2-.8 2-.6z" fill="#f5c63a"/></symbol>
<symbol id="jee" viewBox="0 0 16 16"><rect x="4" y="3" width="4" height="9" fill="none" stroke="#a37a3a"/><circle cx="11" cy="5" r="4" fill="#a55a28"/><circle cx="3.500" cy="6" r="2.500" fill="#e0b142"/><circle cx="5" cy="13" r="2.500" fill="#e0b142"/></symbol>
<symbol id="jv" viewBox="0 0 16 16"><path d="M3 4h3v10H3z" fill="none" stroke="#6d6d6d"/><circle cx="4" cy="4" r="3" fill="#3d8f55"/><circle cx="4" cy="10" r="3" fill="#7b4a8f"/><path d="M12 1v8c0 3-3 3-3.500 1.500" fill="none" stroke="#2c5fa8" stroke-width="1.700"/></symbol>
<symbol id="dbg" viewBox="0 0 16 16"><ellipse cx="8" cy="9" rx="3.500" ry="4.800" fill="#9fcf9f" stroke="#3f7f5f"/><path d="M8 4v10M2 4l3.500 3M14 4l-3.500 3M1 9h3M15 9h-3M2 15l3-3M14 15l-3-3" stroke="#3f7f5f"/></symbol>
<symbol id="mg" viewBox="0 0 16 16"><circle cx="6.500" cy="6" r="4.500" fill="#fff" stroke="#7a7a7a" stroke-width="1.300"/><path d="M10 9.500l4.500 4.500" stroke="#7a7a7a" stroke-width="2"/></symbol>
<symbol id="info" viewBox="0 0 16 16"><circle cx="8" cy="8" r="6.800" fill="#fff" stroke="#2a5a9a" stroke-width="1.300"/><path d="M8 7v5M6.500 12.500h3M6.500 7H8" stroke="#2a5a9a" stroke-width="1.300"/><circle cx="8" cy="4.300" r="1" fill="#2a5a9a"/></symbol>
<symbol id="rest" viewBox="0 0 12 12"><rect x="1" y="3.500" width="7" height="7" fill="#f5f5f5" stroke="#555"/><path d="M3.500 3.500V1h7v7H8" fill="none" stroke="#555"/><path d="M1 5.500h7" stroke="#555"/></symbol>
<symbol id="conn" viewBox="0 0 16 16"><circle cx="6" cy="3" r="2.300" fill="#3d8f55"/><circle cx="12" cy="8" r="2.300" fill="#3d8f55"/><circle cx="6" cy="13" r="2.300" fill="#3d8f55"/><path d="M0 3h4M0 13h4M8 8h2" stroke="#555"/></symbol>
<symbol id="tbl" viewBox="0 0 16 16"><rect x="1" y="1.500" width="14" height="13" fill="#fff" stroke="#7a8ea8"/><rect x="1" y="1.500" width="14" height="3" fill="#c5d3e3"/><path d="M1 8h14M1 11h14M6 4.500v10" stroke="#9aaabf"/></symbol>
</defs>

<!-- title + window -->
<circle cx="10" cy="12" r="7.500" fill="#3a3560"/><circle cx="10" cy="12" r="5" fill="#c8c8d8"/><path d="M2.500 12h15M3 9h14M3 15h14" stroke="#fff" stroke-width=".8"/><rect x="2" y="4" width="16" height="16" fill="none" stroke="#666"/>
<path d="M1798 10.500h9" stroke="#222"/>
<use href="#rest" x="1844" y="5" width="11" height="11"/>
<path d="M1890 5l10 10M1900 5l-10 10" stroke="#222"/>

<!-- main toolbar -->
<use href="#new" x="3" y="50" width="18" height="18"/><use href="#dd" x="27" y="57" width="8" height="5"/>
<use href="#sv" x="43" y="51" width="16" height="16"/><use href="#sva" x="67" y="51" width="16" height="16"/>
<rect x="88" y="49" width="1" height="20" fill="#a8a8a8"/>
<use href="#bin" x="97" y="51" width="16" height="16"/>
<use href="#mon" x="168" y="50" width="16" height="18"/>
<use href="#nib" x="239" y="51" width="16" height="16"/><use href="#srch" x="262" y="51" width="17" height="17"/>
<use href="#brush" x="285" y="51" width="17" height="17"/><use href="#gr" x="309" y="51" width="16" height="16"/>
<use href="#pg" x="331" y="51" width="16" height="16"/><use href="#para" x="354" y="51" width="16" height="16"/>
<use href="#typ" x="377" y="50" width="16" height="16"/><use href="#gnew" x="401" y="51" width="16" height="16"/><use href="#dd" x="424" y="57" width="8" height="5"/>
<use href="#bug" x="441" y="51" width="16" height="16"/><use href="#dd" x="464" y="57" width="8" height="5"/>
<use href="#run" x="481" y="51" width="16" height="16"/><use href="#dd" x="504" y="57" width="8" height="5"/>
<use href="#runx" x="518" y="50" width="18" height="18"/><use href="#dd" x="544" y="57" width="8" height="5"/>
<use href="#opr" x="584" y="50" width="16" height="16"/><use href="#opf" x="606" y="51" width="16" height="16"/>
<use href="#tch" x="631" y="50" width="17" height="17"/><use href="#dd" x="655" y="57" width="8" height="5"/>
<use href="#dnn" x="718" y="51" width="16" height="18"/><use href="#dd" x="743" y="57" width="8" height="5"/>
<use href="#upp" x="758" y="51" width="16" height="18"/><use href="#dd" x="783" y="57" width="8" height="5"/>
<use href="#bk" x="799" y="51" width="16" height="16"/><use href="#bkg" x="823" y="51" width="16" height="16"/><use href="#ddg" x="846" y="57" width="8" height="5"/>
<use href="#fwg" x="863" y="51" width="16" height="16"/><use href="#ddg" x="886" y="57" width="8" height="5"/>
<path d="M1647 71c3-2 3-18 4-29" fill="none" stroke="#444"/>
<use href="#persp" x="1660" y="52" width="16" height="16"/><rect x="1682" y="50" width="1" height="20" fill="#bbb"/>
<use href="#jee" x="1691" y="52" width="16" height="16"/><use href="#jv" x="1766" y="52" width="17" height="17"/><use href="#dbg" x="1822" y="52" width="16" height="16"/>

<!-- package explorer chrome -->
<use href="#pkx" x="5" y="81" width="16" height="16"/><use href="#x" x="133" y="83" width="12" height="12"/>
<use href="#hier" x="156" y="81" width="16" height="16"/>
<use href="#min" x="309" y="81" width="11" height="7"/><use href="#max" x="332" y="81" width="10" height="12"/>
<use href="#clp" x="251" y="105" width="16" height="16"/><use href="#lnk" x="272" y="104" width="17" height="17"/><rect x="295" y="103" width="1" height="18" fill="#a8a8a8"/><use href="#gr" x="304" y="105" width="16" height="16"/><use href="#tri" x="335" y="107" width="12" height="8"/>

<!-- tree icons -->
<g>
<use href="#chr" x="5" y="126" width="16" height="16"/><use href="#prj" x="25" y="126" width="16" height="16"/>
<use href="#chd" x="5" y="146" width="16" height="16"/><use href="#prj" x="25" y="146" width="16" height="16"/><use href="#warn" x="24" y="147" width="16" height="16"/>
<use href="#chd" x="25" y="166" width="16" height="16"/><use href="#src" x="44" y="166" width="16" height="16"/><use href="#warn" x="43" y="167" width="16" height="16"/>
<use href="#chr" x="44" y="186" width="16" height="16"/><use href="#pkg" x="63" y="186" width="16" height="16"/><use href="#warn" x="62" y="187" width="16" height="16"/>
<use href="#chd" x="44" y="206" width="16" height="16"/><use href="#pkg" x="63" y="206" width="16" height="16"/>
<use href="#chr" x="63" y="226" width="16" height="16"/><use href="#jf" x="82" y="226" width="16" height="16"/>
<use href="#chr" x="63" y="246" width="16" height="16"/><use href="#jf" x="82" y="246" width="16" height="16"/>
<use href="#chr" x="63" y="266" width="16" height="16"/><use href="#jf" x="82" y="266" width="16" height="16"/>
<use href="#chr" x="63" y="286" width="16" height="16"/><use href="#jf" x="82" y="286" width="16" height="16"/>
<use href="#chr" x="63" y="306" width="16" height="16"/><use href="#jf" x="82" y="306" width="16" height="16"/>
<use href="#txt" x="82" y="326" width="16" height="16"/>
<use href="#txt" x="63" y="346" width="16" height="16"/>
<use href="#txt" x="63" y="366" width="16" height="16"/>
<use href="#chr" x="25" y="386" width="16" height="16"/><use href="#lib" x="44" y="386" width="16" height="16"/>
<use href="#chr" x="25" y="406" width="16" height="16"/><use href="#lib" x="44" y="406" width="16" height="16"/>
<use href="#chr" x="25" y="426" width="16" height="16"/><use href="#jar2" x="44" y="426" width="16" height="16"/>
<use href="#chr" x="25" y="446" width="16" height="16"/><use href="#jar" x="44" y="446" width="16" height="16"/>
<use href="#chr" x="25" y="466" width="16" height="16"/><use href="#jar" x="44" y="466" width="16" height="16"/>
<use href="#chr" x="25" y="486" width="16" height="16"/><use href="#jar" x="44" y="486" width="16" height="16"/>
<use href="#chr" x="25" y="506" width="16" height="16"/><use href="#jar" x="44" y="506" width="16" height="16"/>
<use href="#chr" x="25" y="526" width="16" height="16"/><use href="#jar" x="44" y="526" width="16" height="16"/>
<use href="#chr" x="25" y="546" width="16" height="16"/><use href="#jar" x="44" y="546" width="16" height="16"/>
<use href="#chr" x="25" y="566" width="16" height="16"/><use href="#jar" x="44" y="566" width="16" height="16"/>
<use href="#chr" x="25" y="586" width="16" height="16"/><use href="#jar" x="44" y="586" width="16" height="16"/>
<use href="#chr" x="25" y="606" width="16" height="16"/><use href="#lib" x="44" y="606" width="16" height="16"/>
<use href="#chr" x="25" y="626" width="16" height="16"/><use href="#jar" x="44" y="626" width="16" height="16"/>
<use href="#chr" x="25" y="646" width="16" height="16"/><use href="#jar" x="44" y="646" width="16" height="16"/>
<use href="#chr" x="25" y="666" width="16" height="16"/><use href="#jar2" x="44" y="666" width="16" height="16"/>
<use href="#chr" x="25" y="686" width="16" height="16"/><use href="#jar" x="44" y="686" width="16" height="16"/>
<use href="#chr" x="25" y="706" width="16" height="16"/><use href="#jar" x="44" y="706" width="16" height="16"/>
<use href="#chr" x="25" y="726" width="16" height="16"/><use href="#jar" x="44" y="726" width="16" height="16"/>
<use href="#chr" x="25" y="746" width="16" height="16"/><use href="#jar" x="44" y="746" width="16" height="16"/>
<use href="#chr" x="25" y="766" width="16" height="16"/><use href="#fld" x="44" y="766" width="16" height="16"/>
<use href="#chr" x="25" y="786" width="16" height="16"/><use href="#fld" x="44" y="786" width="16" height="16"/>
<use href="#chr" x="25" y="806" width="16" height="16"/><use href="#fld" x="44" y="806" width="16" height="16"/>
<use href="#chr" x="25" y="826" width="16" height="16"/><use href="#fld" x="44" y="826" width="16" height="16"/>
<use href="#chr" x="25" y="846" width="16" height="16"/><use href="#fld" x="44" y="846" width="16" height="16"/>
<use href="#chr" x="25" y="866" width="16" height="16"/><use href="#fld" x="44" y="866" width="16" height="16"/>
<use href="#chr" x="25" y="886" width="16" height="16"/><use href="#fld" x="44" y="886" width="16" height="16"/>
<use href="#xml" x="44" y="906" width="16" height="16"/>
<use href="#chr" x="5" y="926" width="16" height="16"/><use href="#prj" x="25" y="926" width="16" height="16"/><use href="#warn" x="24" y="927" width="16" height="16"/>
<use href="#chr" x="5" y="946" width="16" height="16"/><use href="#prj" x="25" y="946" width="16" height="16"/>
<use href="#chr" x="5" y="966" width="16" height="16"/><use href="#mvn" x="25" y="966" width="16" height="16"/>
<path d="M26 995v-7h4l1-2h6l1 2h3v7z" fill="#a9c6e6" stroke="#6d8fb5"/>
</g>
<use href="#up" x="336" y="127" width="12" height="12"/><use href="#dn" x="336" y="980" width="12" height="12"/>
<use href="#lf" x="5" y="997" width="12" height="12"/><use href="#rt" x="319" y="997" width="12" height="12"/>

<!-- editor chrome -->
<use href="#jf" x="362" y="81" width="16" height="16"/><use href="#x" x="484" y="83" width="12" height="12"/>
<use href="#min" x="1529" y="81" width="11" height="7"/><use href="#max" x="1552" y="81" width="10" height="12"/>
<use href="#fold" x="386" y="172" width="12" height="12"/><use href="#fold" x="386" y="376" width="12" height="12"/><use href="#fold" x="386" y="478" width="12" height="12"/><use href="#fold" x="386" y="580" width="12" height="12"/>
<use href="#up" x="1542" y="105" width="12" height="12"/><use href="#dn" x="1542" y="644" width="12" height="12"/>
<use href="#lfg" x="399" y="661" width="12" height="12"/><use href="#rtg" x="1525" y="661" width="12" height="12"/>

<!-- task list -->
<use href="#tsk" x="1581" y="81" width="16" height="16"/><use href="#x" x="1658" y="83" width="12" height="12"/>
<use href="#min" x="1853" y="81" width="11" height="7"/><use href="#max" x="1876" y="81" width="10" height="12"/>
<use href="#new" x="1640" y="105" width="16" height="16"/><use href="#dd" x="1663" y="110" width="8" height="5"/><rect x="1677" y="104" width="1" height="18" fill="#a8a8a8"/>
<use href="#tr" x="1687" y="105" width="16" height="16"/><use href="#tr2" x="1709" y="105" width="16" height="16"/><rect x="1731" y="104" width="1" height="18" fill="#a8a8a8"/>
<use href="#gr" x="1740" y="105" width="16" height="16"/><rect x="1763" y="104" width="1" height="18" fill="#a8a8a8"/>
<use href="#xx" x="1771" y="105" width="16" height="16"/><use href="#ppl" x="1794" y="104" width="16" height="16"/><use href="#clp" x="1818" y="105" width="16" height="16"/><rect x="1839" y="104" width="1" height="18" fill="#a8a8a8"/>
<use href="#syn" x="1848" y="105" width="16" height="16"/><use href="#tri" x="1879" y="107" width="12" height="8"/>
<use href="#mg" x="1677" y="131" width="16" height="16"/>
<use href="#arr" x="1708" y="135" width="6" height="10"/><use href="#arr" x="1749" y="135" width="6" height="10"/>
<use href="#info" x="1585" y="310" width="16" height="16"/><use href="#x" x="1874" y="312" width="12" height="12"/>

<!-- outline / ant -->
<use href="#outl" x="1581" y="384" width="16" height="16"/><use href="#ant" x="1650" y="384" width="16" height="16"/><use href="#x" x="1696" y="386" width="12" height="12"/>
<use href="#min" x="1853" y="384" width="11" height="7"/><use href="#max" x="1876" y="384" width="10" height="12"/>
<use href="#antp" x="1736" y="409" width="16" height="16"/><use href="#tch" x="1759" y="409" width="16" height="16"/><use href="#tgt" x="1781" y="409" width="16" height="16"/><use href="#rung" x="1805" y="409" width="16" height="16"/><use href="#xg" x="1828" y="409" width="16" height="16"/><use href="#xxg" x="1851" y="408" width="16" height="16"/><use href="#clg" x="1874" y="409" width="16" height="16"/>

<!-- right trim -->
<use href="#rest" x="1903" y="82" width="11" height="11"/><use href="#conn" x="1900" y="102" width="17" height="17"/><use href="#rest" x="1903" y="126" width="11" height="11"/><use href="#tbl" x="1900" y="145" width="16" height="16"/>

<!-- console chrome -->
<use href="#pb" x="360" y="687" width="16" height="16"/><text x="447" y="700" font-family="Liberation Sans,sans-serif" font-size="14" fill="#2c5fa8">@</text>
<use href="#dcl" x="519" y="687" width="16" height="16"/><use href="#mon" x="614" y="686" width="16" height="16"/><use href="#x" x="687" y="689" width="12" height="12"/><use href="#ng" x="709" y="687" width="16" height="16"/>
<use href="#stp" x="1548" y="687" width="14" height="14"/><use href="#xg" x="1571" y="686" width="16" height="16"/><use href="#xxg" x="1593" y="686" width="16" height="16"/><rect x="1615" y="685" width="1" height="18" fill="#a8a8a8"/>
<use href="#doc" x="1624" y="686" width="16" height="16"/><use href="#lock" x="1648" y="686" width="16" height="16"/><use href="#wrap" x="1671" y="686" width="16" height="16"/><use href="#cs1" x="1694" y="686" width="16" height="16"/><use href="#cs2" x="1717" y="686" width="16" height="16"/><rect x="1738" y="685" width="1" height="18" fill="#a8a8a8"/>
<use href="#pinw" x="1748" y="686" width="16" height="16"/><use href="#mng" x="1771" y="686" width="16" height="16"/><use href="#ddg" x="1794" y="692" width="8" height="5"/><use href="#opp" x="1811" y="686" width="16" height="16"/><use href="#dd" x="1834" y="692" width="8" height="5"/>
<use href="#min" x="1852" y="688" width="11" height="7"/><use href="#max" x="1876" y="688" width="10" height="12"/>
<use href="#up" x="1879" y="730" width="12" height="12"/><use href="#lfg" x="362" y="997" width="12" height="12"/>
</svg>

<!-- red box -->
<div class="a" style="left:351px;top:890px;width:132px;height:63px;border:3px solid #e53c3c"></div>

<!-- watermark -->
<div class="t" style="left:1594px;top:982px;font:24px/30px 'Noto Sans CJK SC','Liberation Sans',sans-serif;color:#555;text-shadow:1px 1px 0 #fff,-1px 0 0 #fff,0 -1px 0 #bbb;letter-spacing:.85px">掘金技术社区 @ 北京_宏哥</div>
</body></html>
